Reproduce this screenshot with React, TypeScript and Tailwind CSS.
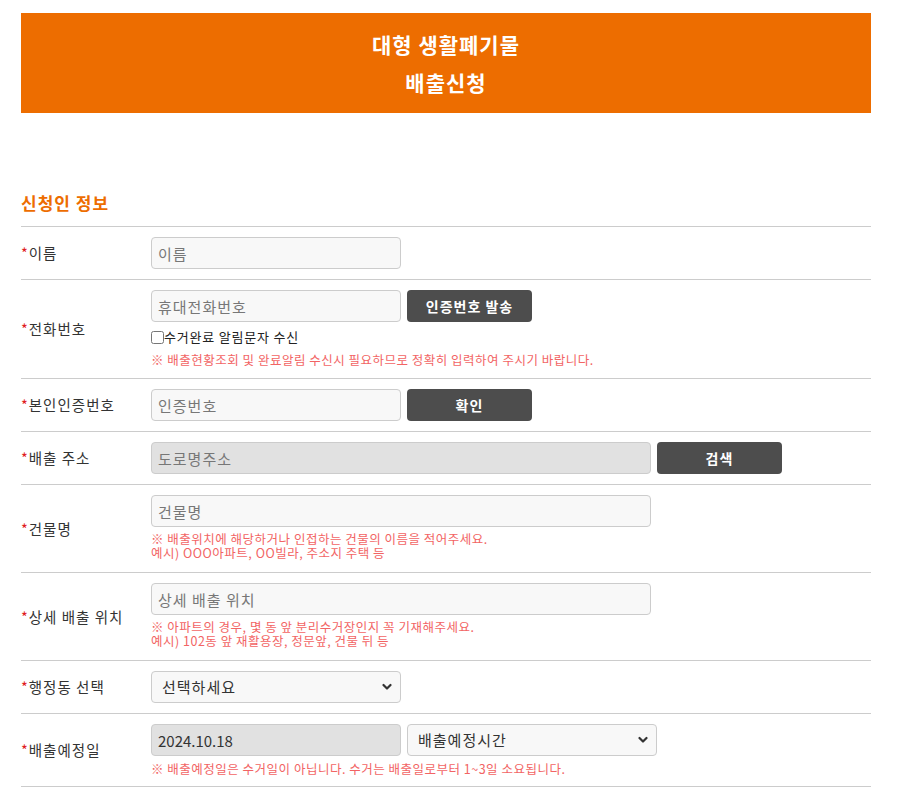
import type { ReactNode } from 'react';

const FONT = { fontFamily: '"Noto Sans CJK KR", "Noto Sans", sans-serif' };

function Row({ label, children }: { label: string; children: ReactNode }) {
  return (
    <div className="flex items-center border-b border-[#cccccc]">
      <div className="w-[130px] shrink-0 text-[14.5px] tracking-[1px] text-[#333333]">
        <span className="text-[#e0201b]">*</span>
        {label}
      </div>
      <div className="flex-1 py-[10px]">{children}</div>
    </div>
  );
}

function TextInput({ placeholder, wide, disabled, value }: { placeholder: string; wide?: boolean; disabled?: boolean; value?: string }) {
  return (
    <input
      type="text"
      placeholder={placeholder}
      defaultValue={value}
      readOnly={disabled}
      className={`h-[32px] rounded-[4px] border border-[#cccccc] px-[6px] text-[15px] text-[#333333] placeholder:text-[#777777] outline-none ${
        wide ? 'w-[500px]' : 'w-[250px]'
      } ${disabled ? 'bg-[#e1e1e1]' : 'bg-[#f8f8f8]'} ${value ? '' : 'tracking-[1px]'}`}
    />
  );
}

function Select({ text }: { text: string }) {
  return (
    <div className="relative h-[32px] w-[250px]">
      <select className="h-full w-full appearance-none rounded-[4px] border border-[#cccccc] bg-[#f8f8f8] pl-[10px] text-[15px] tracking-[1px] text-[#333333] outline-none">
        <option>{text}</option>
      </select>
      <svg
        className="pointer-events-none absolute right-[9px] top-[12px] h-[8px] w-[10px]"
        viewBox="0 0 10 8"
        fill="none"
        stroke="#333333"
        strokeWidth="2.2"
        strokeLinecap="round"
        strokeLinejoin="round"
      >
        <path d="M1.5 2 L5 5.5 L8.5 2" />
      </svg>
    </div>
  );
}

function Btn({ children }: { children: ReactNode }) {
  return (
    <button
      type="button"
      className="h-[32px] w-[125px] rounded-[4px] bg-[#4d4d4d] text-[14px] font-bold tracking-[1px] text-white"
    >
      {children}
    </button>
  );
}

function Note({ children }: { children: ReactNode }) {
  return <p className="mt-[5px] text-[12.5px] leading-[15px] tracking-[0.5px] text-[#f26464]">{children}</p>;
}

function Note2({ lines }: { lines: string[] }) {
  return (
    <div className="mt-[5px] pb-[2px] text-[12.5px] leading-[14px] tracking-[0.5px] text-[#f26464]">
      {lines.map((l) => (
        <p key={l}>{l}</p>
      ))}
    </div>
  );
}

export default function App() {
  return (
    <div className="min-h-[810px] bg-white" style={FONT}>
      <div className="mx-[21px] w-[850px] pt-[13px]">
        <div className="flex h-[100px] flex-col items-center justify-center bg-[#ed6d00] text-[21px] font-bold leading-[38px] tracking-[1px] text-white">
          <div>대형 생활폐기물</div>
          <div>배출신청</div>
        </div>

        <h2 className="mt-[78px] mb-[11px] text-[17px] font-bold leading-[24px] tracking-[1px] text-[#ed6d00]">신청인 정보</h2>

        <div className="border-t border-[#cccccc]">
          <Row label="이름">
            <TextInput placeholder="이름" />
          </Row>

          <Row label="전화번호">
            <div className="flex gap-[6px]">
              <TextInput placeholder="휴대전화번호" />
              <Btn>인증번호 발송</Btn>
            </div>
            <label className="mt-[5px] flex h-[20px] items-center text-[13px] tracking-[0.8px] text-[#222222]">
              <input type="checkbox" className="m-0 h-[13px] w-[13px]" />
              수거완료 알림문자 수신
            </label>
            <div className="pb-[1px]">
              <Note>※ 배출현황조회 및 완료알림 수신시 필요하므로 정확히 입력하여 주시기 바랍니다.</Note>
            </div>
          </Row>

          <Row label="본인인증번호">
            <div className="flex gap-[6px]">
              <TextInput placeholder="인증번호" />
              <Btn>확인</Btn>
            </div>
          </Row>

          <Row label="배출 주소">
            <div className="flex gap-[6px]">
              <TextInput placeholder="도로명주소" wide disabled />
              <Btn>검색</Btn>
            </div>
          </Row>

          <Row label="건물명">
            <TextInput placeholder="건물명" wide />
            <Note2
              lines={[
                '※ 배출위치에 해당하거나 인접하는 건물의 이름을 적어주세요.',
                '예시) OOO아파트, OO빌라, 주소지 주택 등',
              ]}
            />
          </Row>

          <Row label="상세 배출 위치">
            <TextInput placeholder="상세 배출 위치" wide />
            <Note2
              lines={[
                '※ 아파트의 경우, 몇 동 앞 분리수거장인지 꼭 기재해주세요.',
                '예시) 102동 앞 재활용장, 정문앞, 건물 뒤 등',
              ]}
            />
          </Row>

          <Row label="행정동 선택">
            <Select text="선택하세요" />
          </Row>

          <Row label="배출예정일">
            <div className="flex gap-[6px]">
              <TextInput placeholder="" value="2024.10.18" disabled />
              <Select text="배출예정시간" />
            </div>
            <Note>※ 배출예정일은 수거일이 아닙니다. 수거는 배출일로부터 1~3일 소요됩니다.</Note>
          </Row>
        </div>
      </div>
    </div>
  );
}
